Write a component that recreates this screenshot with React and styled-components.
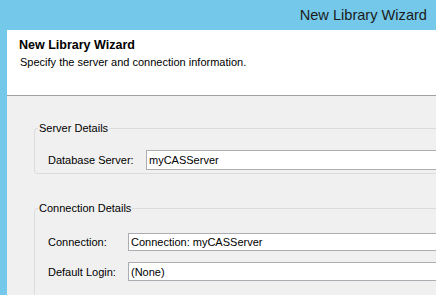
import React from "react";
import styled, { createGlobalStyle } from "styled-components";

const GlobalStyle = createGlobalStyle`
  html, body {
    margin: 0;
    padding: 0;
    background: #74c9ea;
  }
  body {
    font-family: "Liberation Sans", Arial, sans-serif;
  }
`;

const App = () => {
  return (
    <Window>
      <GlobalStyle />
      <TitleBar>New Library Wizard</TitleBar>
      <Frame>
        <Header>
          <Heading>New Library Wizard</Heading>
          <Subtitle>Specify the server and connection information.</Subtitle>
        </Header>
        <Content>
          <Group $padTop={15} $padBottom={3}>
            <Legend>Server Details</Legend>
            <Row>
              <Label $width={98}>Database Server:</Label>
              <Field $height={20}>myCASServer</Field>
            </Row>
          </Group>
          <Group $padTop={18} $padBottom={20}>
            <Legend>Connection Details</Legend>
            <Rows>
              <Row>
                <Label $width={80}>Connection:</Label>
                <Field $height={18}>Connection: myCASServer</Field>
              </Row>
              <Row>
                <Label $width={80}>Default Login:</Label>
                <Field $height={19}>(None)</Field>
              </Row>
            </Rows>
          </Group>
        </Content>
      </Frame>
    </Window>
  );
};

export default App;

const Window = styled.div`
  width: 100vw;
  height: 100vh;
  background: #74c9ea;
  display: flex;
  flex-direction: column;
  overflow: hidden;
`;

const TitleBar = styled.div`
  height: 30px;
  flex-shrink: 0;
  display: flex;
  align-items: center;
  justify-content: flex-end;
  padding: 0 9px 0 0;
  font-size: 14.6px;
  color: #1b1b1b;
`;

const Frame = styled.div`
  flex: 1;
  margin-left: 7px;
  background: #f0f0f0;
  display: flex;
  flex-direction: column;
  overflow: hidden;
`;

const Header = styled.div`
  height: 66px;
  flex-shrink: 0;
  box-sizing: border-box;
  background: #ffffff;
  border-bottom: 1px solid #a0a0a0;
  padding: 8px 12px 0;
  display: flex;
  flex-direction: column;
  gap: 2px;
`;

const Heading = styled.span`
  font-weight: bold;
  font-size: 12.5px;
  line-height: 15px;
  color: #000;
`;

const Subtitle = styled.span`
  font-size: 11px;
  line-height: 14px;
  padding-left: 1px;
  color: #000;
`;

const Content = styled.div`
  padding: 26px 0 0 27px;
  display: flex;
  flex-direction: column;
  gap: 28px;
`;

const Group = styled.fieldset`
  margin: 0 -60px 0 0;
  min-width: 0;
  border: 1px solid #dcdcdc;
  border-radius: 3px;
  padding: ${(p) => p.$padTop}px 0 ${(p) => p.$padBottom}px 13px;
`;

const Legend = styled.legend`
  font-size: 11px;
  line-height: 13px;
  padding: 0 1px;
  margin-left: -10px;
  color: #000;
`;

const Rows = styled.div`
  display: flex;
  flex-direction: column;
  gap: 11px;
`;

const Row = styled.div`
  display: flex;
  align-items: center;
`;

const Label = styled.span`
  width: ${(p) => p.$width}px;
  flex-shrink: 0;
  font-size: 11px;
  color: #000;
`;

const Field = styled.div`
  flex: 1;
  height: ${(p) => p.$height}px;
  box-sizing: border-box;
  border: 1px solid #abadb3;
  background: #ffffff;
  padding-left: 2px;
  display: flex;
  align-items: center;
  font-size: 11px;
  color: #000;
`;
